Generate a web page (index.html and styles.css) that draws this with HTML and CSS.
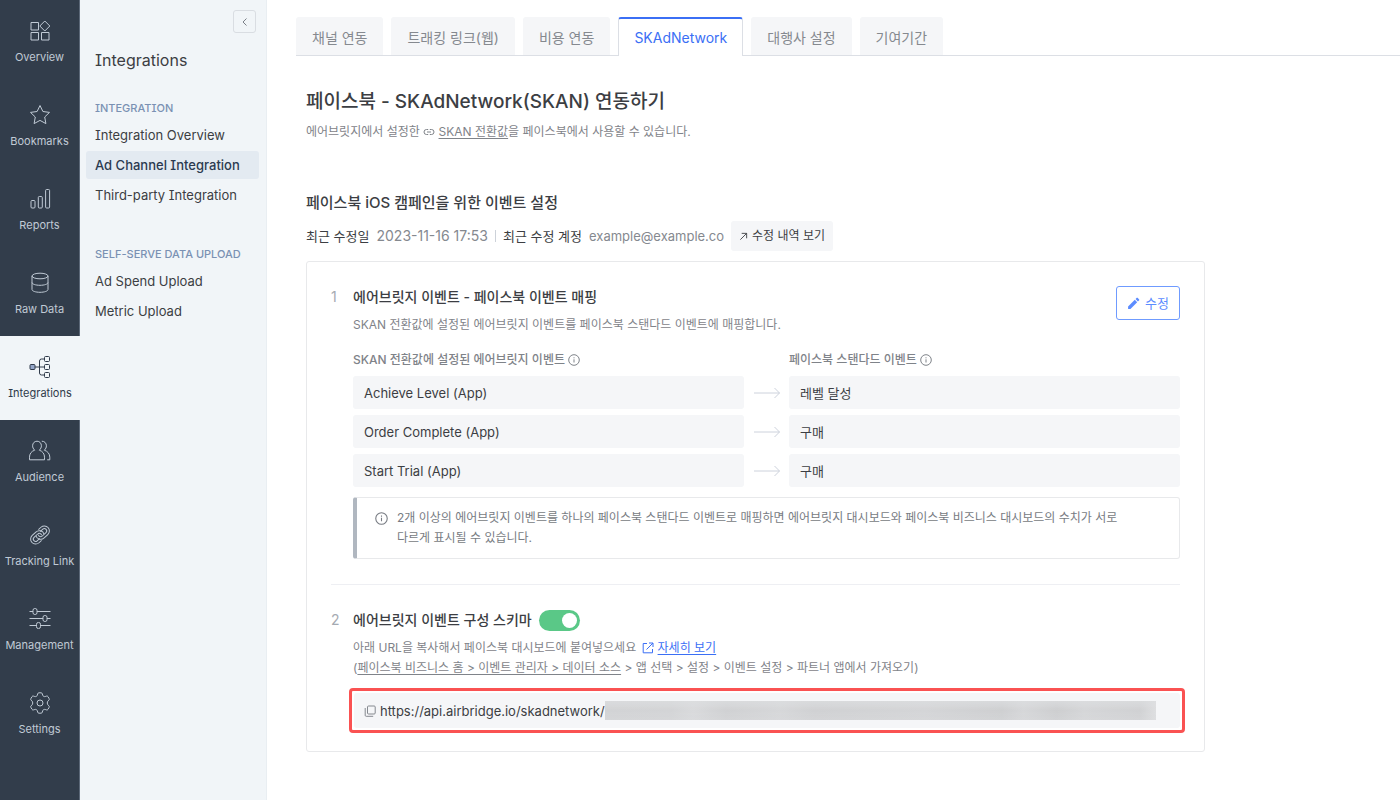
FILE: index.html
```html
<!DOCTYPE html>
<html lang="ko">
<head>
    <meta charset="UTF-8">
    <meta name="viewport" content="width=device-width, initial-scale=1.0">
    <title>SKAdNetwork - Ad Channel Integration</title>
    <link rel="stylesheet" href="styles.css">
</head>
<body>

    <nav class="rail">
        <a href="#" class="rail-item">
            <svg class="rail-icon" viewBox="0 0 24 24"><path d="M3 3.500h7.500v7.500H3zM3 13.500h7.500V21H3zM13.500 13.500H21V21h-7.500zM16.800 2l5 5-5 5-5-5z"/></svg>
            <span>Overview</span>
        </a>
        <a href="#" class="rail-item">
            <svg class="rail-icon" viewBox="0 0 24 24"><path d="M12 2.500l2.900 6 6.600.9-4.800 4.600 1.200 6.600-5.900-3.200-5.900 3.200L7.300 14 2.500 9.400l6.600-.9z"/></svg>
            <span>Bookmarks</span>
        </a>
        <a href="#" class="rail-item">
            <svg class="rail-icon" viewBox="0 0 24 24"><rect x="3" y="13.500" width="4" height="7.500" rx="1"/><rect x="10.300" y="9.500" width="4" height="11.500" rx="1"/><rect x="17.600" y="2.500" width="4" height="18.500" rx="1"/></svg>
            <span>Reports</span>
        </a>
        <a href="#" class="rail-item">
            <svg class="rail-icon" viewBox="0 0 24 24"><ellipse cx="12" cy="5" rx="8" ry="2.800"/><path d="M4 5v13.500c0 1.600 3.600 2.800 8 2.800s8-1.200 8-2.800V5M4 11.500c0 1.600 3.600 2.800 8 2.800s8-1.200 8-2.800"/></svg>
            <span>Raw Data</span>
        </a>
        <a href="#" class="rail-item active">
            <svg class="rail-icon" viewBox="0 0 24 24"><path d="M7 12h10M17 4h-3.500q-2 0-2 2v12q0 2 2 2H17"/><rect class="node" x="2" y="9.500" width="5" height="5" rx="1"/><rect x="16.500" y="1.500" width="5" height="5" rx="1"/><rect x="16.500" y="9.500" width="5" height="5" rx="1"/><rect x="16.500" y="17.500" width="5" height="5" rx="1"/></svg>
            <span>Integrations</span>
        </a>
        <a href="#" class="rail-item">
            <svg class="rail-icon" viewBox="0 0 24 24"><path d="M6.700 11.200C5.200 9.800 4.600 8.300 4.600 6.800c0-2.700 1.900-4.600 4.400-4.600s4.400 1.900 4.400 4.600c0 1.500-.6 3-2.100 4.400 3.500 1 5.200 3.800 5.200 7v2.600h-15v-2.600c0-3.200 1.700-6 5.200-7zM13.800 2.200c2.700 0 4.600 1.900 4.600 4.600 0 1.500-.6 3-2.100 4.400 3.500 1 5.500 3.800 5.500 7v2.600h-2.600"/></svg>
            <span>Audience</span>
        </a>
        <a href="#" class="rail-item">
            <svg class="rail-icon" viewBox="0 0 24 24"><g transform="rotate(-43 12 12)"><path d="M9.500 17H6A5 5 0 0 1 6 7h5a5 5 0 0 1 4.500 7.200M14.500 7H18a5 5 0 0 1 0 10h-5a5 5 0 0 1-4.500-7.200"/><path d="M9.500 14.300H6a2.300 2.300 0 0 1 0-4.600h5a2.300 2.300 0 0 1 2 3.600M14.500 9.700H18a2.300 2.300 0 0 1 0 4.600h-5a2.300 2.300 0 0 1-2-3.600"/></g></svg>
            <span>Tracking Link</span>
        </a>
        <a href="#" class="rail-item">
            <svg class="rail-icon" viewBox="0 0 24 24"><path d="M1.500 4.500H5M9 4.500h13.500M1.500 11.500H15M19 11.500h3.500M1.500 18.500h7M12.500 18.500h10"/><rect x="5" y="1.500" width="4" height="6" rx="1.800"/><rect x="15" y="8.500" width="4" height="6" rx="1.800"/><rect x="8.500" y="15.500" width="4" height="6" rx="1.800"/></svg>
            <span>Management</span>
        </a>
        <a href="#" class="rail-item">
            <svg class="rail-icon" viewBox="0 0 24 24"><circle cx="12" cy="12" r="3"/><path d="M10.900 1.800h2.200q1 0 1.200 1l.3 1.300q.2.800 1 1.200.8.500 1.600.2l1.300-.4q1-.3 1.500.6l1.100 1.900q.5.900-.2 1.600l-1 .9q-.6.600-.6 1.900t.6 1.900l1 .9q.7.700.2 1.600L20 18.300q-.5.900-1.500.6l-1.300-.4q-.8-.3-1.600.2-.8.400-1 1.200l-.3 1.300q-.2 1-1.200 1h-2.200q-1 0-1.200-1l-.3-1.300q-.2-.8-1-1.200-.8-.5-1.600-.2l-1.300.4q-1 .3-1.500-.6l-1.100-1.900q-.5-.9.200-1.600l1-.9q.6-.6.600-1.900t-.6-1.900l-1-.9q-.7-.7-.2-1.600L4 5.700q.5-.9 1.500-.6l1.300.4q.8.300 1.600-.2.800-.4 1-1.200l.3-1.300q.2-1 1.200-1z"/></svg>
            <span>Settings</span>
        </a>
    </nav>

    <aside class="side">
        <button type="button" class="collapse" aria-label="Collapse menu">
            <svg viewBox="0 0 12 12"><path d="M7.500 2.500L4 6l3.500 3.500"/></svg>
        </button>
        <h2 class="side-title">Integrations</h2>
        <div class="side-group">
            <h3>INTEGRATION</h3>
            <a href="#">Integration Overview</a>
            <a href="#" class="active">Ad Channel Integration</a>
            <a href="#">Third-party Integration</a>
        </div>
        <div class="side-group">
            <h3>SELF-SERVE DATA UPLOAD</h3>
            <a href="#">Ad Spend Upload</a>
            <a href="#">Metric Upload</a>
        </div>
    </aside>

    <main class="main">
        <div class="tabs" role="tablist">
            <button type="button" role="tab" class="tab">채널 연동</button>
            <button type="button" role="tab" class="tab">트래킹 링크(웹)</button>
            <button type="button" role="tab" class="tab">비용 연동</button>
            <button type="button" role="tab" class="tab active" aria-selected="true">SKAdNetwork</button>
            <button type="button" role="tab" class="tab">대행사 설정</button>
            <button type="button" role="tab" class="tab">기여기간</button>
        </div>

        <div class="content">
            <h1>페이스북 - SKAdNetwork(SKAN) 연동하기</h1>
            <p class="lead">에어브릿지에서 설정한
                <svg class="link-icon" viewBox="0 0 12 12"><path d="M5.200 8.500H3.500a2.500 2.500 0 0 1 0-5h1.700M6.800 3.500h1.700a2.500 2.500 0 0 1 0 5H6.800M4 6h4"/></svg>
                <a href="#">SKAN 전환값</a>을 페이스북에서 사용할 수 있습니다.</p>

            <h2 class="section-title">페이스북 iOS 캠페인을 위한 이벤트 설정</h2>
            <div class="meta">
                <span class="meta-label">최근 수정일</span>
                <span class="meta-date">2023-11-16 17:53</span>
                <span class="meta-line"></span>
                <span class="meta-label">최근 수정 계정</span>
                <span>example@example.co</span>
                <button type="button" class="history">
                    <svg viewBox="0 0 10 10"><path d="M1.500 8.500l7-7M3 1.500h5.500V7"/></svg>
                    수정 내역 보기
                </button>
            </div>

            <div class="card">
                <section class="step">
                    <span class="step-no">1</span>
                    <div class="step-body">
                        <div class="step-head">
                            <div>
                                <h3>에어브릿지 이벤트 - 페이스북 이벤트 매핑</h3>
                                <p class="desc">SKAN 전환값에 설정된 에어브릿지 이벤트를 페이스북 스탠다드 이벤트에 매핑합니다.</p>
                            </div>
                            <button type="button" class="edit">
                                <svg viewBox="0 0 12 12"><path d="M1 11V8.800L7.200 2.600l2.200 2.200L3.200 11zM7.900 1.900L9 .8q.4-.4.8 0l1.400 1.400q.4.4 0 .8l-1.100 1.100z"/></svg>
                                수정
                            </button>
                        </div>

                        <table class="mapping">
                            <thead>
                                <tr>
                                    <th>SKAN 전환값에 설정된 에어브릿지 이벤트 <svg class="info" viewBox="0 0 12 12"><circle cx="6" cy="6" r="5.300"/><path d="M6 5.300v3.200M6 3.300v1"/></svg></th>
                                    <th class="arrow"></th>
                                    <th>페이스북 스탠다드 이벤트 <svg class="info" viewBox="0 0 12 12"><circle cx="6" cy="6" r="5.300"/><path d="M6 5.300v3.200M6 3.300v1"/></svg></th>
                                </tr>
                            </thead>
                            <tbody>
                                <tr>
                                    <td>Achieve Level (App)</td>
                                    <td class="arrow"><svg viewBox="0 0 28 12"><path d="M1 6h25.500M21.500 1l5 5-5 5"/></svg></td>
                                    <td>레벨 달성</td>
                                </tr>
                                <tr>
                                    <td>Order Complete (App)</td>
                                    <td class="arrow"><svg viewBox="0 0 28 12"><path d="M1 6h25.500M21.500 1l5 5-5 5"/></svg></td>
                                    <td>구매</td>
                                </tr>
                                <tr>
                                    <td>Start Trial (App)</td>
                                    <td class="arrow"><svg viewBox="0 0 28 12"><path d="M1 6h25.500M21.500 1l5 5-5 5"/></svg></td>
                                    <td>구매</td>
                                </tr>
                            </tbody>
                        </table>

                        <div class="notice">
                            <svg viewBox="0 0 12 12"><circle cx="6" cy="6" r="5.300"/><path d="M6 5.300v3.200M6 3.300v1"/></svg>
                            <p>2개 이상의 에어브릿지 이벤트를 하나의 페이스북 스탠다드 이벤트로 매핑하면 에어브릿지 대시보드와 페이스북 비즈니스 대시보드의 수치가 서로 다르게 표시될 수 있습니다.</p>
                        </div>
                    </div>
                </section>

                <section class="step">
                    <span class="step-no">2</span>
                    <div class="step-body">
                        <div class="schema-title">
                            <h3><label for="schema">에어브릿지 이벤트 구성 스키마</label></h3>
                            <input type="checkbox" id="schema" class="toggle" checked>
                        </div>
                        <p class="desc">아래 URL을 복사해서 페이스북 대시보드에 붙여넣으세요
                            <a href="#" class="more"><svg viewBox="0 0 12 12"><path d="M5 1.500H1.200v9.300h9.300V7M7 1h4v4M11 1L4.500 7.500"/></svg><span>자세히 보기</span></a><br>
                            (<a href="#">페이스북 비즈니스 홈 &gt; 이벤트 관리자 &gt; 데이터 소스</a> &gt; 앱 선택 &gt; 설정 &gt; 이벤트 설정 &gt; 파트너 앱에서 가져오기)</p>
                        <div class="url-frame">
                            <div class="url">
                                <button type="button" class="copy" aria-label="Copy URL">
                                    <svg viewBox="0 0 12 12"><rect x="3.500" y="1" width="7.700" height="8" rx="1"/><path d="M1.200 3v7.300q0 1 1 1h7"/></svg>
                                </button>
                                <span>https://api.airbridge.io/skadnetwork/</span>
                                <span class="masked"></span>
                            </div>
                        </div>
                    </div>
                </section>
            </div>
        </div>
    </main>

</body>
</html>
```
FILE: styles.css
```css
* {
    box-sizing: border-box;
}

body {
    margin: 0;
    display: flex;
    min-height: 100vh;
    font-family: Inter, 'Noto Sans CJK KR', sans-serif;
    font-feature-settings: 'cv08';
    font-size: 13px;
    line-height: 20px;
    word-break: keep-all;
    color: #3c3e43;
    background: #fff;
}

h1, h2, h3, p {
    margin: 0;
    font-weight: 500;
}

p {
    font-weight: 400;
}

button {
    font: inherit;
    font-feature-settings: inherit;
    cursor: pointer;
}

svg {
    fill: none;
    stroke: currentColor;
    flex: none;
}

/* Left icon rail */
.rail {
    width: 80px;
    flex: none;
    background: #323d4b;
    border-right: 1px solid #5c6878;
}

.rail-item {
    display: flex;
    flex-direction: column;
    align-items: center;
    gap: 6px;
    height: 84px;
    padding-top: 19px;
    font-size: 11px;
    line-height: 16px;
    color: #c0cad5;
    text-decoration: none;
    white-space: nowrap;
}

.rail-item.active {
    margin-right: -1px;
    background: #f1f5f8;
    color: #2f3a4a;
}

.rail-icon {
    width: 24px;
    height: 24px;
    stroke-linejoin: round;
}

.node {
    fill: #93a5c8;
}

/* Sub menu */
.side {
    width: 187px;
    flex: none;
    display: flex;
    flex-direction: column;
    padding: 10px 7px 0 6px;
    background: #f1f5f8;
    border-right: 1px solid #e9eef2;
}

.collapse {
    align-self: flex-end;
    display: flex;
    align-items: center;
    justify-content: center;
    width: 23px;
    height: 23px;
    margin-right: 3px;
    padding: 0;
    background: none;
    border: 1px solid #d9dde2;
    border-radius: 3px;
    color: #7a7f87;
}

.collapse svg {
    width: 12px;
    height: 12px;
}

.side-title {
    margin: 15px 9px 28px;
    font-size: 16px;
    line-height: 24px;
    font-weight: 400;
}

.side-group {
    display: flex;
    flex-direction: column;
    gap: 2px;
    margin-bottom: 37px;
}

.side-group h3 {
    padding: 0 9px;
    margin-bottom: 3px;
    font-size: 11px;
    line-height: 16px;
    color: #7a91b3;
}

.side-group a {
    padding: 0 9px;
    border-radius: 3px;
    line-height: 28px;
    color: #3c3e43;
    text-decoration: none;
}

.side-group a.active {
    background: #e3eaf1;
    color: #2b3a50;
    font-weight: 500;
}

/* Main area */
.main {
    flex: 1;
    min-width: 0;
    padding: 17px 0 40px 29px;
}

.tabs {
    display: flex;
    gap: 8px;
    border-bottom: 1px solid #dcdfe5;
}

.tab {
    height: 38px;
    padding: 3px 16px 0;
    background: #f5f6f8;
    border: 0;
    border-radius: 3px 3px 0 0;
    font-size: 14px;
    color: #85898f;
}

.tab.active {
    height: 39px;
    margin-bottom: -1px;
    padding: 1px 15px 0;
    background: #fff;
    border: 1px solid #dcdfe5;
    border-top: 2px solid #3b6ff5;
    border-bottom: 0;
    color: #3b6ff5;
}

.content {
    max-width: 909px;
    padding: 33px 0 0 10px;
}

h1 {
    font-size: 19px;
    line-height: 26px;
}

.lead {
    margin-top: 7px;
    font-size: 12px;
    color: #7f8389;
}

.lead a,
.desc a {
    color: inherit;
    text-underline-offset: 2px;
}

.link-icon {
    width: 12px;
    height: 12px;
    vertical-align: -2px;
}

.section-title {
    margin-top: 49px;
    font-size: 15px;
    line-height: 24px;
}

.meta {
    display: flex;
    align-items: center;
    gap: 7px;
    margin: 6px 0 10px;
    color: #85898f;
}

.meta-label {
    color: #3c3e43;
}

.meta-date {
    font-size: 14px;
}

.meta-line {
    width: 1px;
    height: 12px;
    background: #cdd2d9;
}

.history {
    display: flex;
    align-items: center;
    gap: 4px;
    height: 30px;
    padding: 0 8px;
    background: #f5f6f8;
    border: 0;
    border-radius: 3px;
    font-size: 12px;
    color: #3c3e43;
}

.history svg {
    width: 9px;
    height: 9px;
}

.card {
    padding: 24px;
    border: 1px solid #e8e9eb;
    border-radius: 3px;
}

.step {
    display: flex;
}

.step + .step {
    margin-top: 25px;
    padding-top: 24px;
    border-top: 1px solid #eeeff3;
}

.step-no {
    width: 22px;
    flex: none;
    font-size: 14px;
    line-height: 22px;
    color: #a5aab2;
}

.step-body {
    flex: 1;
    min-width: 0;
}

.step-head {
    display: flex;
    justify-content: space-between;
    align-items: flex-start;
}

.step h3 {
    font-size: 14px;
    line-height: 22px;
}

.desc {
    margin-top: 7px;
    font-size: 12px;
    color: #7f8389;
}

.edit {
    display: flex;
    align-items: center;
    gap: 5px;
    height: 34px;
    padding: 0 10px;
    background: #fff;
    border: 1px solid #6f9bff;
    border-radius: 3px;
    color: #5c8cff;
}

.edit svg {
    width: 13px;
    height: 13px;
    fill: currentColor;
    stroke: none;
}

/* Event mapping */
.mapping {
    width: 100%;
    margin-top: 9px;
    table-layout: fixed;
    border-collapse: separate;
    border-spacing: 0 6px;
}

.mapping th {
    padding: 0;
    font-size: 12px;
    font-weight: 500;
    line-height: 20px;
    text-align: left;
    color: #7f8389;
}

.mapping td {
    height: 33px;
    padding: 0 11px;
    background: #f5f6f8;
    border-radius: 3px;
}

.mapping .arrow {
    width: 45px;
    padding: 0 9px;
    background: none;
}

.arrow svg {
    display: block;
    width: 28px;
    height: 12px;
    color: #cdd2dc;
}

.info {
    width: 12px;
    height: 12px;
    vertical-align: -2px;
}

.notice {
    display: flex;
    gap: 9px;
    margin-top: 4px;
    padding: 10px 32px 10px 18px;
    border: 1px solid #e8e9eb;
    border-left: 4px solid #b0b7c0;
    border-radius: 3px;
    font-size: 12px;
    color: #777b82;
}

.notice svg {
    width: 13px;
    height: 13px;
    margin-top: 4px;
}

/* Schema URL */
.schema-title {
    display: flex;
    align-items: center;
    gap: 7px;
}

.toggle {
    appearance: none;
    width: 41px;
    height: 21px;
    margin: 0;
    padding: 3px;
    background: #5ac887;
    border-radius: 11px;
    cursor: pointer;
}

.toggle::before {
    content: '';
    display: block;
    width: 15px;
    height: 15px;
    border-radius: 50%;
    background: #fff;
}

.toggle:checked::before {
    margin-left: auto;
}

.desc .more {
    margin-left: 2px;
    color: #3b6ff5;
    text-decoration: none;
}

.more span {
    margin-left: 4px;
    text-decoration: underline;
    text-underline-offset: 2px;
}

.more svg {
    width: 12px;
    height: 12px;
    vertical-align: -2px;
}

.url-frame {
    margin: 10px -5px -6px -4px;
    padding: 2px;
    border: 3px solid #fa5252;
    border-radius: 4px;
}

.url {
    display: flex;
    align-items: center;
    height: 35px;
    padding: 0 24px 0 10px;
    background: #f5f6f8;
    border-radius: 3px;
}

.copy {
    display: flex;
    margin-right: 4px;
    padding: 0;
    background: none;
    border: 0;
    color: #85898f;
}

.copy svg {
    width: 12px;
    height: 12px;
}

.masked {
    flex: 1;
    height: 19px;
    background:
        linear-gradient(rgba(222, 223, 225, 0.7), rgba(222, 223, 225, 0) 50%, rgba(222, 223, 225, 0.3)),
        linear-gradient(90deg, #d2d3d5, #d3d4d6 12%, #d9dadc 16%, #d0d1d3 22%, #d6d7d9 32%, #d0d1d3 38%, #d4d5d7 58%, #cecfd1 72%, #d6d7d9 76%, #cdced0 82%, #d5d6d8 87%, #d0d1d3 97%, #dedfe1);
}
```
